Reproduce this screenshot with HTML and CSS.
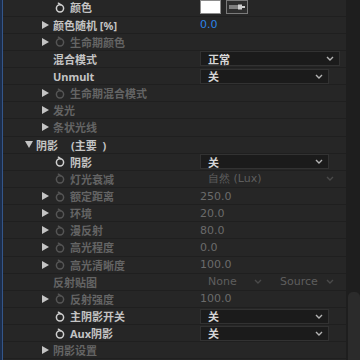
FILE: index.html
```html
<!DOCTYPE html>
<html lang="zh">
<head>
  <meta charset="UTF-8" />
  <title>效果控件</title>
  <link rel="stylesheet" href="styles.css">
</head>
<body>
  <div class="app">
    <div class="edge"></div>

    <div class="panel">
      <div class="row">
        <div class="label"><span class="tri"></span><span class="sw"><svg viewBox="0 0 10 11"><circle cx="5" cy="6.3" r="3.6"/><path d="M3.4 1.2 L5.6 2.7"/></svg></span><span class="txt">颜色</span></div>
        <div class="value">
          <span class="swatch"></span>
          <span class="picker"><svg viewBox="0 0 20 12"><path d="M2 5 H12 M2 7 H12" class="thin"/><rect x="11" y="3.5" width="4" height="5"/><rect x="15" y="5" width="3" height="2"/></svg></span>
        </div>
      </div>

      <div class="row">
        <div class="label"><span class="tri"><svg viewBox="0 0 7 8"><path d="M0 0 L7 4 L0 8Z"/></svg></span><span class="txt">颜色随机 [%]</span></div>
        <div class="value"><span class="num blue">0.0</span></div>
      </div>

      <div class="row dim">
        <div class="label"><span class="tri"><svg viewBox="0 0 7 8"><path d="M0 0 L7 4 L0 8Z"/></svg></span><span class="sw"><svg viewBox="0 0 10 11"><circle cx="5" cy="6.3" r="3.6"/><path d="M3.4 1.2 L5.6 2.7"/></svg></span><span class="txt">生命期颜色</span></div>
        <div class="value"></div>
      </div>

      <div class="row">
        <div class="label"><span class="tri"></span><span class="txt">混合模式</span></div>
        <div class="value"><span class="drop wide">正常<svg viewBox="0 0 8 5"><polyline points="1,1 4,4 7,1"/></svg></span></div>
      </div>

      <div class="row">
        <div class="label"><span class="tri"></span><span class="txt">Unmult</span></div>
        <div class="value"><span class="drop">关<svg viewBox="0 0 8 5"><polyline points="1,1 4,4 7,1"/></svg></span></div>
      </div>

      <div class="row dim">
        <div class="label"><span class="tri"><svg viewBox="0 0 7 8"><path d="M0 0 L7 4 L0 8Z"/></svg></span><span class="sw"><svg viewBox="0 0 10 11"><circle cx="5" cy="6.3" r="3.6"/><path d="M3.4 1.2 L5.6 2.7"/></svg></span><span class="txt">生命期混合模式</span></div>
        <div class="value"></div>
      </div>

      <div class="row dim">
        <div class="label"><span class="tri"><svg viewBox="0 0 7 8"><path d="M0 0 L7 4 L0 8Z"/></svg></span><span class="txt">发光</span></div>
        <div class="value"></div>
      </div>

      <div class="row dim">
        <div class="label"><span class="tri"><svg viewBox="0 0 7 8"><path d="M0 0 L7 4 L0 8Z"/></svg></span><span class="txt">条状光线</span></div>
        <div class="value"></div>
      </div>

      <div class="row">
        <div class="label top"><span class="tri"><svg viewBox="0 0 8 7"><path d="M0 0 L8 0 L4 7Z"/></svg></span><span class="txt">阴影</span><span class="txt sub">(主要&nbsp;&nbsp;)</span></div>
        <div class="value"></div>
      </div>

      <div class="row">
        <div class="label"><span class="tri"></span><span class="sw"><svg viewBox="0 0 10 11"><circle cx="5" cy="6.3" r="3.6"/><path d="M3.4 1.2 L5.6 2.7"/></svg></span><span class="txt">阴影</span></div>
        <div class="value"><span class="drop">关<svg viewBox="0 0 8 5"><polyline points="1,1 4,4 7,1"/></svg></span></div>
      </div>

      <div class="row dim">
        <div class="label"><span class="tri"></span><span class="sw"><svg viewBox="0 0 10 11"><circle cx="5" cy="6.3" r="3.6"/><path d="M3.4 1.2 L5.6 2.7"/></svg></span><span class="txt">灯光衰减</span></div>
        <div class="value"><span class="drop wide off">自然 (Lux)<svg viewBox="0 0 8 5"><polyline points="1,1 4,4 7,1"/></svg></span></div>
      </div>

      <div class="row dim">
        <div class="label"><span class="tri"><svg viewBox="0 0 7 8"><path d="M0 0 L7 4 L0 8Z"/></svg></span><span class="sw"><svg viewBox="0 0 10 11"><circle cx="5" cy="6.3" r="3.6"/><path d="M3.4 1.2 L5.6 2.7"/></svg></span><span class="txt">额定距离</span></div>
        <div class="value"><span class="num">250.0</span></div>
      </div>

      <div class="row dim">
        <div class="label"><span class="tri"><svg viewBox="0 0 7 8"><path d="M0 0 L7 4 L0 8Z"/></svg></span><span class="sw"><svg viewBox="0 0 10 11"><circle cx="5" cy="6.3" r="3.6"/><path d="M3.4 1.2 L5.6 2.7"/></svg></span><span class="txt">环境</span></div>
        <div class="value"><span class="num">20.0</span></div>
      </div>

      <div class="row dim">
        <div class="label"><span class="tri"><svg viewBox="0 0 7 8"><path d="M0 0 L7 4 L0 8Z"/></svg></span><span class="sw"><svg viewBox="0 0 10 11"><circle cx="5" cy="6.3" r="3.6"/><path d="M3.4 1.2 L5.6 2.7"/></svg></span><span class="txt">漫反射</span></div>
        <div class="value"><span class="num">80.0</span></div>
      </div>

      <div class="row dim">
        <div class="label"><span class="tri"><svg viewBox="0 0 7 8"><path d="M0 0 L7 4 L0 8Z"/></svg></span><span class="sw"><svg viewBox="0 0 10 11"><circle cx="5" cy="6.3" r="3.6"/><path d="M3.4 1.2 L5.6 2.7"/></svg></span><span class="txt">高光程度</span></div>
        <div class="value"><span class="num">0.0</span></div>
      </div>

      <div class="row dim">
        <div class="label"><span class="tri"><svg viewBox="0 0 7 8"><path d="M0 0 L7 4 L0 8Z"/></svg></span><span class="sw"><svg viewBox="0 0 10 11"><circle cx="5" cy="6.3" r="3.6"/><path d="M3.4 1.2 L5.6 2.7"/></svg></span><span class="txt">高光清晰度</span></div>
        <div class="value"><span class="num">100.0</span></div>
      </div>

      <div class="row dim">
        <div class="label"><span class="tri"></span><span class="txt">反射贴图</span></div>
        <div class="value">
          <span class="drop half off">None<svg viewBox="0 0 8 5"><polyline points="1,1 4,4 7,1"/></svg></span>
          <span class="drop half off">Source<svg viewBox="0 0 8 5"><polyline points="1,1 4,4 7,1"/></svg></span>
        </div>
      </div>

      <div class="row dim">
        <div class="label"><span class="tri"><svg viewBox="0 0 7 8"><path d="M0 0 L7 4 L0 8Z"/></svg></span><span class="sw"><svg viewBox="0 0 10 11"><circle cx="5" cy="6.3" r="3.6"/><path d="M3.4 1.2 L5.6 2.7"/></svg></span><span class="txt">反射强度</span></div>
        <div class="value"><span class="num">100.0</span></div>
      </div>

      <div class="row">
        <div class="label"><span class="tri"></span><span class="sw"><svg viewBox="0 0 10 11"><circle cx="5" cy="6.3" r="3.6"/><path d="M3.4 1.2 L5.6 2.7"/></svg></span><span class="txt">主阴影开关</span></div>
        <div class="value"><span class="drop">关<svg viewBox="0 0 8 5"><polyline points="1,1 4,4 7,1"/></svg></span></div>
      </div>

      <div class="row">
        <div class="label"><span class="tri"></span><span class="sw"><svg viewBox="0 0 10 11"><circle cx="5" cy="6.3" r="3.6"/><path d="M3.4 1.2 L5.6 2.7"/></svg></span><span class="txt">Aux阴影</span></div>
        <div class="value"><span class="drop">关<svg viewBox="0 0 8 5"><polyline points="1,1 4,4 7,1"/></svg></span></div>
      </div>

      <div class="row dim">
        <div class="label"><span class="tri"><svg viewBox="0 0 7 8"><path d="M0 0 L7 4 L0 8Z"/></svg></span><span class="txt">阴影设置</span></div>
        <div class="value"></div>
      </div>
    </div>

    <div class="scroll"><div class="thumb"></div></div>
  </div>
</body>
</html>
```

FILE: styles.css
```css
* {
  margin: 0;
  padding: 0;
  box-sizing: border-box;
}

html, body {
  height: 100%;
  background: #262626;
  overflow: hidden;
  font-family: 'Noto Sans', 'Noto Sans CJK SC', sans-serif;
  font-size: 11px;
  color: #c4c4c4;
}

.app {
  display: flex;
  height: 360px;
}

.edge {
  width: 3px;
  background: linear-gradient(to right, #1c2d4a 0, #1c2d4a 2px, #34568a 2px, #34568a 3px);
}

.panel {
  flex: 1;
  margin-top: -0.6px;
}

.row {
  display: grid;
  grid-template-columns: 197px 1fr;
  align-items: center;
  height: 17.15px;
  border-bottom: 1px solid #1f1f1f;
}

.label {
  display: flex;
  align-items: center;
  padding-left: 39px;
  font-weight: 700;
  white-space: nowrap;
}

.label.top {
  padding-left: 22px;
}

.label .sub {
  margin-left: 13px;
}

.tri {
  width: 11px;
  flex-shrink: 0;
  display: flex;
  align-items: center;
}

.tri svg {
  width: 7px;
  height: 8px;
  fill: #c4c4c4;
}

.label.top .tri svg {
  width: 8px;
  height: 7px;
}

.sw {
  width: 17px;
  flex-shrink: 0;
  display: flex;
  align-items: center;
}

.sw svg {
  width: 10px;
  height: 11px;
  margin-left: 2px;
  fill: none;
  stroke: #d0d0d0;
  stroke-width: 1.5;
  stroke-linecap: round;
}

.dim .txt {
  color: #646464;
}

.dim .sw svg {
  stroke: #555;
}

.value {
  display: flex;
  align-items: center;
  gap: 4px;
  font-family: 'DejaVu Sans', sans-serif;
}

.swatch {
  width: 21px;
  height: 14px;
  background: #fff;
  border: 1px solid #8c8c8c;
}

.picker {
  width: 22px;
  height: 14px;
  margin-left: 1px;
  background: #2e2e2e;
  border: 1px solid #7a7a7a;
  display: flex;
  align-items: center;
  justify-content: center;
}

.picker svg {
  width: 20px;
  height: 12px;
  fill: #cfcfcf;
}

.picker .thin {
  stroke: #cfcfcf;
  stroke-width: 1;
  fill: none;
}

.num {
  color: #6b6b6b;
}

.num.blue {
  color: #2b84e6;
}

.drop {
  width: 129px;
  height: 15px;
  display: flex;
  align-items: center;
  justify-content: space-between;
  padding: 0 5px 0 7px;
  background: #1b1b1b;
  border: 1px solid #323232;
  font-family: 'Noto Sans', 'Noto Sans CJK SC', sans-serif;
  font-weight: 700;
  color: #d6d6d6;
}

.drop.wide {
  width: 140px;
}

.drop svg {
  width: 8px;
  height: 5px;
  fill: none;
  stroke: #b4b4b4;
  stroke-width: 1.4;
}

.drop.off {
  background: transparent;
  border-color: transparent;
  color: #5e5e5e;
  font-family: 'DejaVu Sans', sans-serif;
  font-weight: 400;
}

.drop.off svg {
  stroke: #4a4a4a;
}

.drop.half {
  width: 68px;
}

.scroll {
  width: 14px;
  background: #1e1e1e;
  display: flex;
  flex-direction: column;
  justify-content: flex-end;
}

.thumb {
  height: 68px;
  margin-left: 2px;
  background: #2b2b2b;
  border-radius: 5px 5px 0 0;
}
```
